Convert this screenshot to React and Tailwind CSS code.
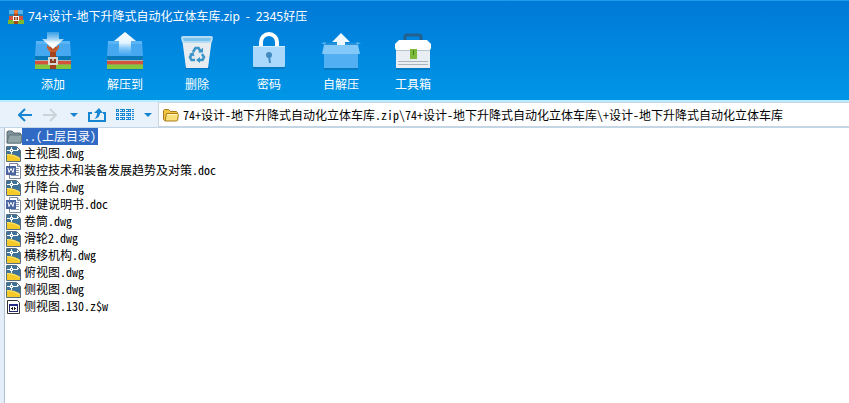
import { useState } from 'react';

const ARCHIVE = '74+设计-地下升降式自动化立体车库.zip';
const PATH = ARCHIVE + '\\74+设计-地下升降式自动化立体车库\\+设计-地下升降式自动化立体车库';

const FILES = [
  { name: '..(上层目录)', type: 'up' },
  { name: '主视图.dwg', type: 'dwg' },
  { name: '数控技术和装备发展趋势及对策.doc', type: 'doc' },
  { name: '升降台.dwg', type: 'dwg' },
  { name: '刘健说明书.doc', type: 'doc' },
  { name: '卷筒.dwg', type: 'dwg' },
  { name: '滑轮2.dwg', type: 'dwg' },
  { name: '横移机构.dwg', type: 'dwg' },
  { name: '俯视图.dwg', type: 'dwg' },
  { name: '侧视图.dwg', type: 'dwg' },
  { name: '侧视图.130.z$w', type: 'other' },
];

function AppLogo() {
  return (
    <svg width="16" height="14" viewBox="0 0 16 14" className="shrink-0" aria-hidden="true">
      <rect x="1" width="14" height="5" fill="#55b4ea" />
      <rect x="1" y="4" width="14" height="3" fill="#2b7fae" />
      <rect x="1" y="6" width="14" height="4" fill="#d5553c" />
      <rect y="10" width="16" height="4" fill="#83b52e" />
      <path d="M6 3h4v11H6z" fill="#a5451d" />
      <path d="M6 0h4v2l-2 3-2-3z" fill="#f07a35" />
      <rect x="5.5" y="6.5" width="5" height="4" fill="#8a3517" stroke="#fff" />
      <path d="M8 7v3" stroke="#fff" />
    </svg>
  );
}

function Books() {
  return (
    <>
      <path d="M2 39h36v2H2z" fill="#0669a6" opacity=".5" />
      <path d="M3 12h34l1 15H2z" fill="#45a8f0" />
      <path d="M3 12h34v3H3z" fill="#5bb5f5" />
      <path d="M2 27h36v4H2z" fill="#0879b8" />
      <path d="M2 31h36v1H2z" fill="#a6b4b8" />
      <path d="M2 32h36v3H2z" fill="#d2523c" />
      <path d="M2 35h36v1H2z" fill="#a09a52" />
      <path d="M2 36h36v4H2z" fill="#84c63c" />
    </>
  );
}

function AddIcon() {
  return (
    <svg width="40" height="42" viewBox="0 0 40 42" aria-hidden="true">
      <defs>
        <linearGradient id="down" x2="0" y2="1">
          <stop stopColor="#b9e2fb" stopOpacity=".3" />
          <stop offset=".7" stopColor="#fff" />
        </linearGradient>
      </defs>
      <Books />
      <path d="M17 17h6v23h-6z" fill="#a2441f" />
      <path d="M14 16l6 5 6-5v3l-3 4h-6l-3-4z" fill="#c95a2b" />
      <path d="M14 3h12v7h5L20 20 9 10h5z" fill="url(#down)" />
      <rect x="16" y="29" width="8" height="6" fill="#8b3b22" stroke="#d8d8d4" strokeWidth="2" />
      <path d="M20 29v3" stroke="#ddd" strokeWidth="1.500" />
    </svg>
  );
}

function ExtractIcon() {
  return (
    <svg width="40" height="42" viewBox="0 0 40 42" aria-hidden="true">
      <defs>
        <linearGradient id="up" x2="0" y2="1">
          <stop stopColor="#fff" />
          <stop offset=".5" stopColor="#e2f3ff" />
          <stop offset="1" stopColor="#7bc3f7" stopOpacity=".2" />
        </linearGradient>
      </defs>
      <Books />
      <path d="M20 3l11 9h-5v13H14V12H9z" fill="url(#up)" />
    </svg>
  );
}

function BinIcon() {
  return (
    <svg width="40" height="42" viewBox="0 0 40 42" aria-hidden="true">
      <path d="M8 38h25v2H8z" fill="#0669a6" opacity=".6" />
      <path d="M5 9h30l-4 30H9z" fill="#e7ecf0" />
      <path d="M4 9q0-2 2-2h28q2 0 2 2l-1 4q-2 1-5 1H10q-3 0-5-1z" fill="#b4dcf3" />
      <path d="M6 9h28l-1 3H7z" fill="#79c3ed" />
      <g fill="none" stroke="#3a94c8" strokeWidth="2.500">
        <path d="M16 23l2.500-4h3l2.500 4" />
        <path d="M25 25l2 3-1.500 3H22" />
        <path d="M18 31h-3.500L13 28l2-3" />
      </g>
      <path d="M21 23.500h5v-5zM23 28v6l-4-3zM12 25l4.500-2 1 4.500z" fill="#3a94c8" />
    </svg>
  );
}

function LockIcon() {
  return (
    <svg width="40" height="42" viewBox="0 0 40 42" aria-hidden="true">
      <path d="M4 38h32v2H4z" fill="#0669a6" opacity=".5" />
      <path d="M12 18v-5a8 8 0 0 1 16 0v5" fill="none" stroke="#fff" strokeWidth="4" />
      <rect x="4" y="17" width="32" height="21" rx="1" fill="#a9d8fc" />
      <path d="M4 17h32v1H4z" fill="#d2ecff" />
      <circle cx="20" cy="26" r="3" fill="#4189bf" />
      <path d="M19 27h2l1 7h-2z" fill="#4189bf" />
    </svg>
  );
}

function SelfExtractIcon() {
  return (
    <svg width="42" height="42" viewBox="0 0 42 42" aria-hidden="true">
      <path d="M4 39h34v2H4z" fill="#0669a6" opacity=".5" />
      <path d="M5 14h32v9H5z" fill="#2492dc" />
      <path d="M21 4l9 9h-5v8h-8v-8h-5z" fill="#eff8ff" />
      <path d="M4 23h34v16H4z" fill="#52b0f2" />
      <path d="M4 16h34l2 9H2z" fill="#82c8f8" />
      <path d="M1 14l5-1-1 3zM41 14l-5-1 1 3z" fill="#55b1ee" />
    </svg>
  );
}

function ToolboxIcon() {
  return (
    <svg width="40" height="42" viewBox="0 0 40 42" aria-hidden="true">
      <path d="M3 39h34v2H3z" fill="#0669a6" opacity=".5" />
      <path d="M12 11V8q0-2 2-2h12q2 0 2 2v3" fill="none" stroke="#24618e" strokeWidth="3" />
      <path d="M3 19h34v20H3z" fill="#e8eef2" />
      <path d="M6 11h28l4 4v4q0 2-2 2H4q-2 0-2-2v-4z" fill="#fff" />
      <path d="M3 21h34v1H3z" fill="#b5c4cd" />
      <path d="M5 32.500h30M5 35.500h30" stroke="#a8b4be" />
      <rect x="17" y="20" width="7" height="10" fill="#7db93b" />
      <path d="M20 21h1v5h-1z" fill="#3d7b1e" />
    </svg>
  );
}

const TOOLS = [
  { label: '添加', Icon: AddIcon },
  { label: '解压到', Icon: ExtractIcon },
  { label: '删除', Icon: BinIcon },
  { label: '密码', Icon: LockIcon },
  { label: '自解压', Icon: SelfExtractIcon },
  { label: '工具箱', Icon: ToolboxIcon },
];

function FileIcon({ type }) {
  if (type === 'up') {
    return (
      <svg width="16" height="16" viewBox="0 0 16 16" className="shrink-0" aria-hidden="true">
        <path d="M1 3l1-1h4l2 2h6l1 1v9H1z" fill="#80929a" stroke="#586e78" />
        <path d="M3 6h13l-1 8H1z" fill="#91a4a8" stroke="#62777e" />
      </svg>
    );
  }
  if (type === 'dwg') {
    return (
      <svg width="16" height="16" viewBox="0 0 16 16" className="shrink-0" aria-hidden="true">
        <path d="M1 1h10l3 3v11H1z" fill="#3f7299" />
        <path d="M1 8q8 0 13 4v3H1z" fill="#f5c927" />
        <path d="M1 8.500q7 0 13 4" fill="none" stroke="#ffe870" />
        <path d="M11 1l3 3h-3z" fill="#fff" />
        <path d="M1 4.500h3M7 4.500h5M5.500 1v2M5.500 6v2" stroke="#fff" />
        <rect x="4.500" y="3.500" width="2" height="2" fill="#3f7299" stroke="#fff" />
        <path d="M.5 15.500V.5h10l4 4v11z" fill="none" stroke="#566f80" />
      </svg>
    );
  }
  if (type === 'doc') {
    return (
      <svg width="16" height="16" viewBox="0 0 16 16" className="shrink-0" aria-hidden="true">
        <path d="M3.500 .5h8l3 3v12h-11z" fill="#fff" stroke="#7b879a" />
        <path d="M11.500 .5v3h3" fill="#dce4ee" stroke="#7b879a" />
        <path d="M10 5.500h3M10 7.500h3M10 9.500h3M5 12.500h8" stroke="#8c9db8" />
        <rect y="3" width="10" height="9" fill="#4a64a0" />
        <path d="M2 5l1 4.500 2-4 2 4L8 5" fill="none" stroke="#fff" />
      </svg>
    );
  }
  return (
    <svg width="16" height="16" viewBox="0 0 16 16" className="shrink-0" aria-hidden="true">
      <path d="M1.500 1.500h10l2 2v11h-12z" fill="#fff" stroke="#333" />
      <rect x="3.500" y="5.500" width="8" height="7" fill="#fff" stroke="#222a6a" />
      <path d="M3 5h9v2H3z" fill="#222a8a" />
      <path d="M5 9h1v-1h1v3H6v-1H5zM8 8h1v1h1v1H9v1H8z" fill="#222" />
    </svg>
  );
}

function FolderIcon() {
  return (
    <svg width="16" height="14" viewBox="0 0 16 14" className="shrink-0" aria-hidden="true">
      <path d="M.5 11.500v-9l1-1h4l2 2h6l1 1v7l-1 1h-12z" fill="#f3c342" stroke="#a9791b" />
      <path d="M3.500 5.500h11l1 1-1 6-1 .5H2z" fill="#fbe07a" stroke="#a9791b" />
      <path d="M4 6.500h10" stroke="#fff6c2" />
    </svg>
  );
}

function Caret() {
  return (
    <svg width="8" height="4" viewBox="0 0 8 4" aria-hidden="true">
      <path d="M0 0h8L4 4z" fill="#1583cf" />
    </svg>
  );
}

function ViewIcon() {
  return (
    <svg width="18" height="11" viewBox="0 0 18 11" fill="#1686d2" aria-hidden="true">
      {[0, 4, 8].map((y) => (
        <g key={y}>
          {[0, 6, 12].map((x) => (
            <path key={x} d={`M${x} ${y}h3v3h-3zM${x + 4} ${y}h2v1h-2zM${x + 4} ${y + 2}h2v1h-2z`} />
          ))}
        </g>
      ))}
      <path d="M1 1h1v1H1zM7 1h1v1H7zM13 1h1v1h-1zM1 5h1v1H1zM7 5h1v1H7zM13 5h1v1h-1zM1 9h1v1H1zM7 9h1v1H7zM13 9h1v1h-1z" fill="#e9f2fa" />
    </svg>
  );
}

function NavBar() {
  const [path, setPath] = useState(PATH);

  return (
    <nav className="flex h-7 items-center border-t-2 border-b border-t-[#b9ecff] border-b-[#c3d6e6] bg-[#e9f2fa]">
      <div className="flex shrink-0 items-center pr-1.5 pl-4.5">
        <button aria-label="后退" className="flex w-6 items-center">
          <svg width="16" height="14" viewBox="0 0 16 14" fill="none" stroke="#1686d2" strokeWidth="2" aria-hidden="true">
            <path d="M7 1L1 7l6 6M1 7h13" />
          </svg>
        </button>
        <button aria-label="前进" className="flex w-7 items-center">
          <svg width="16" height="14" viewBox="0 0 16 14" fill="none" stroke="#cbd3da" strokeWidth="2" aria-hidden="true">
            <path d="M8 1l6 6-6 6M14 7H1" />
          </svg>
        </button>
        <button aria-label="历史" className="flex w-4.5 items-center">
          <Caret />
        </button>
        <button aria-label="上一级" className="flex w-7 items-center">
          <svg width="18" height="14" viewBox="0 0 18 14" aria-hidden="true">
            <path d="M4 5H1v8h16V5h-2" fill="none" stroke="#1686d2" strokeWidth="2" />
            <path d="M6 5l5-5 4 5h-3q0 5-6 6 3-2 3-6z" fill="#1686d2" />
          </svg>
        </button>
        <button aria-label="查看" className="flex w-7 items-center">
          <ViewIcon />
        </button>
        <button aria-label="查看方式">
          <Caret />
        </button>
      </div>
      <label className="flex h-full min-w-0 flex-1 items-center gap-1 border border-r-0 border-[#c7d5e3] bg-white pl-1">
        <FolderIcon />
        <input
          aria-label="路径"
          className="h-5 min-w-0 flex-1 bg-transparent text-black outline-none"
          value={path}
          onChange={(e) => setPath(e.target.value)}
        />
      </label>
    </nav>
  );
}

export default function App() {
  const [selected, setSelected] = useState(0);

  return (
    <div className="flex min-h-screen flex-col bg-white font-['Noto_Sans_CJK_SC',sans-serif] text-xs">
      <header className="h-25 border-t border-[#1a9be6] bg-linear-to-b from-[#0079d7] to-[#0096e6] text-white">
        <h1 className="flex h-8 items-center gap-1 pl-2 font-['Noto_Sans','Noto_Sans_CJK_SC',sans-serif]">
          <AppLogo />
          <span className="flex gap-1.5">
            <span>{ARCHIVE}</span>
            <span>-</span>
            <span>2345好压</span>
          </span>
        </h1>
        <div className="-mt-1 flex pl-[17px]">
          {TOOLS.map(({ label, Icon }) => (
            <button key={label} className="flex w-18 flex-col items-center gap-[5px]">
              <Icon />
              <span>{label}</span>
            </button>
          ))}
        </div>
      </header>
      <div className="flex flex-1 flex-col bg-[#e4eef9] [font-feature-settings:'hwid']">
        <NavBar />
        <ul className="ml-1 flex-1 border-l border-[#b4c3d4] bg-white">
          {FILES.map((file, i) => (
            <li key={file.name}>
              <button className="flex h-[17px] items-center pl-px" onClick={() => setSelected(i)}>
                <FileIcon type={file.type} />
                <span className={i === selected ? 'h-[17px] bg-[#316ac5] px-0.5 leading-[16px] text-white' : 'h-[17px] px-0.5 leading-[16px] text-black'}>
                  {file.name}
                </span>
              </button>
            </li>
          ))}
        </ul>
      </div>
    </div>
  );
}
